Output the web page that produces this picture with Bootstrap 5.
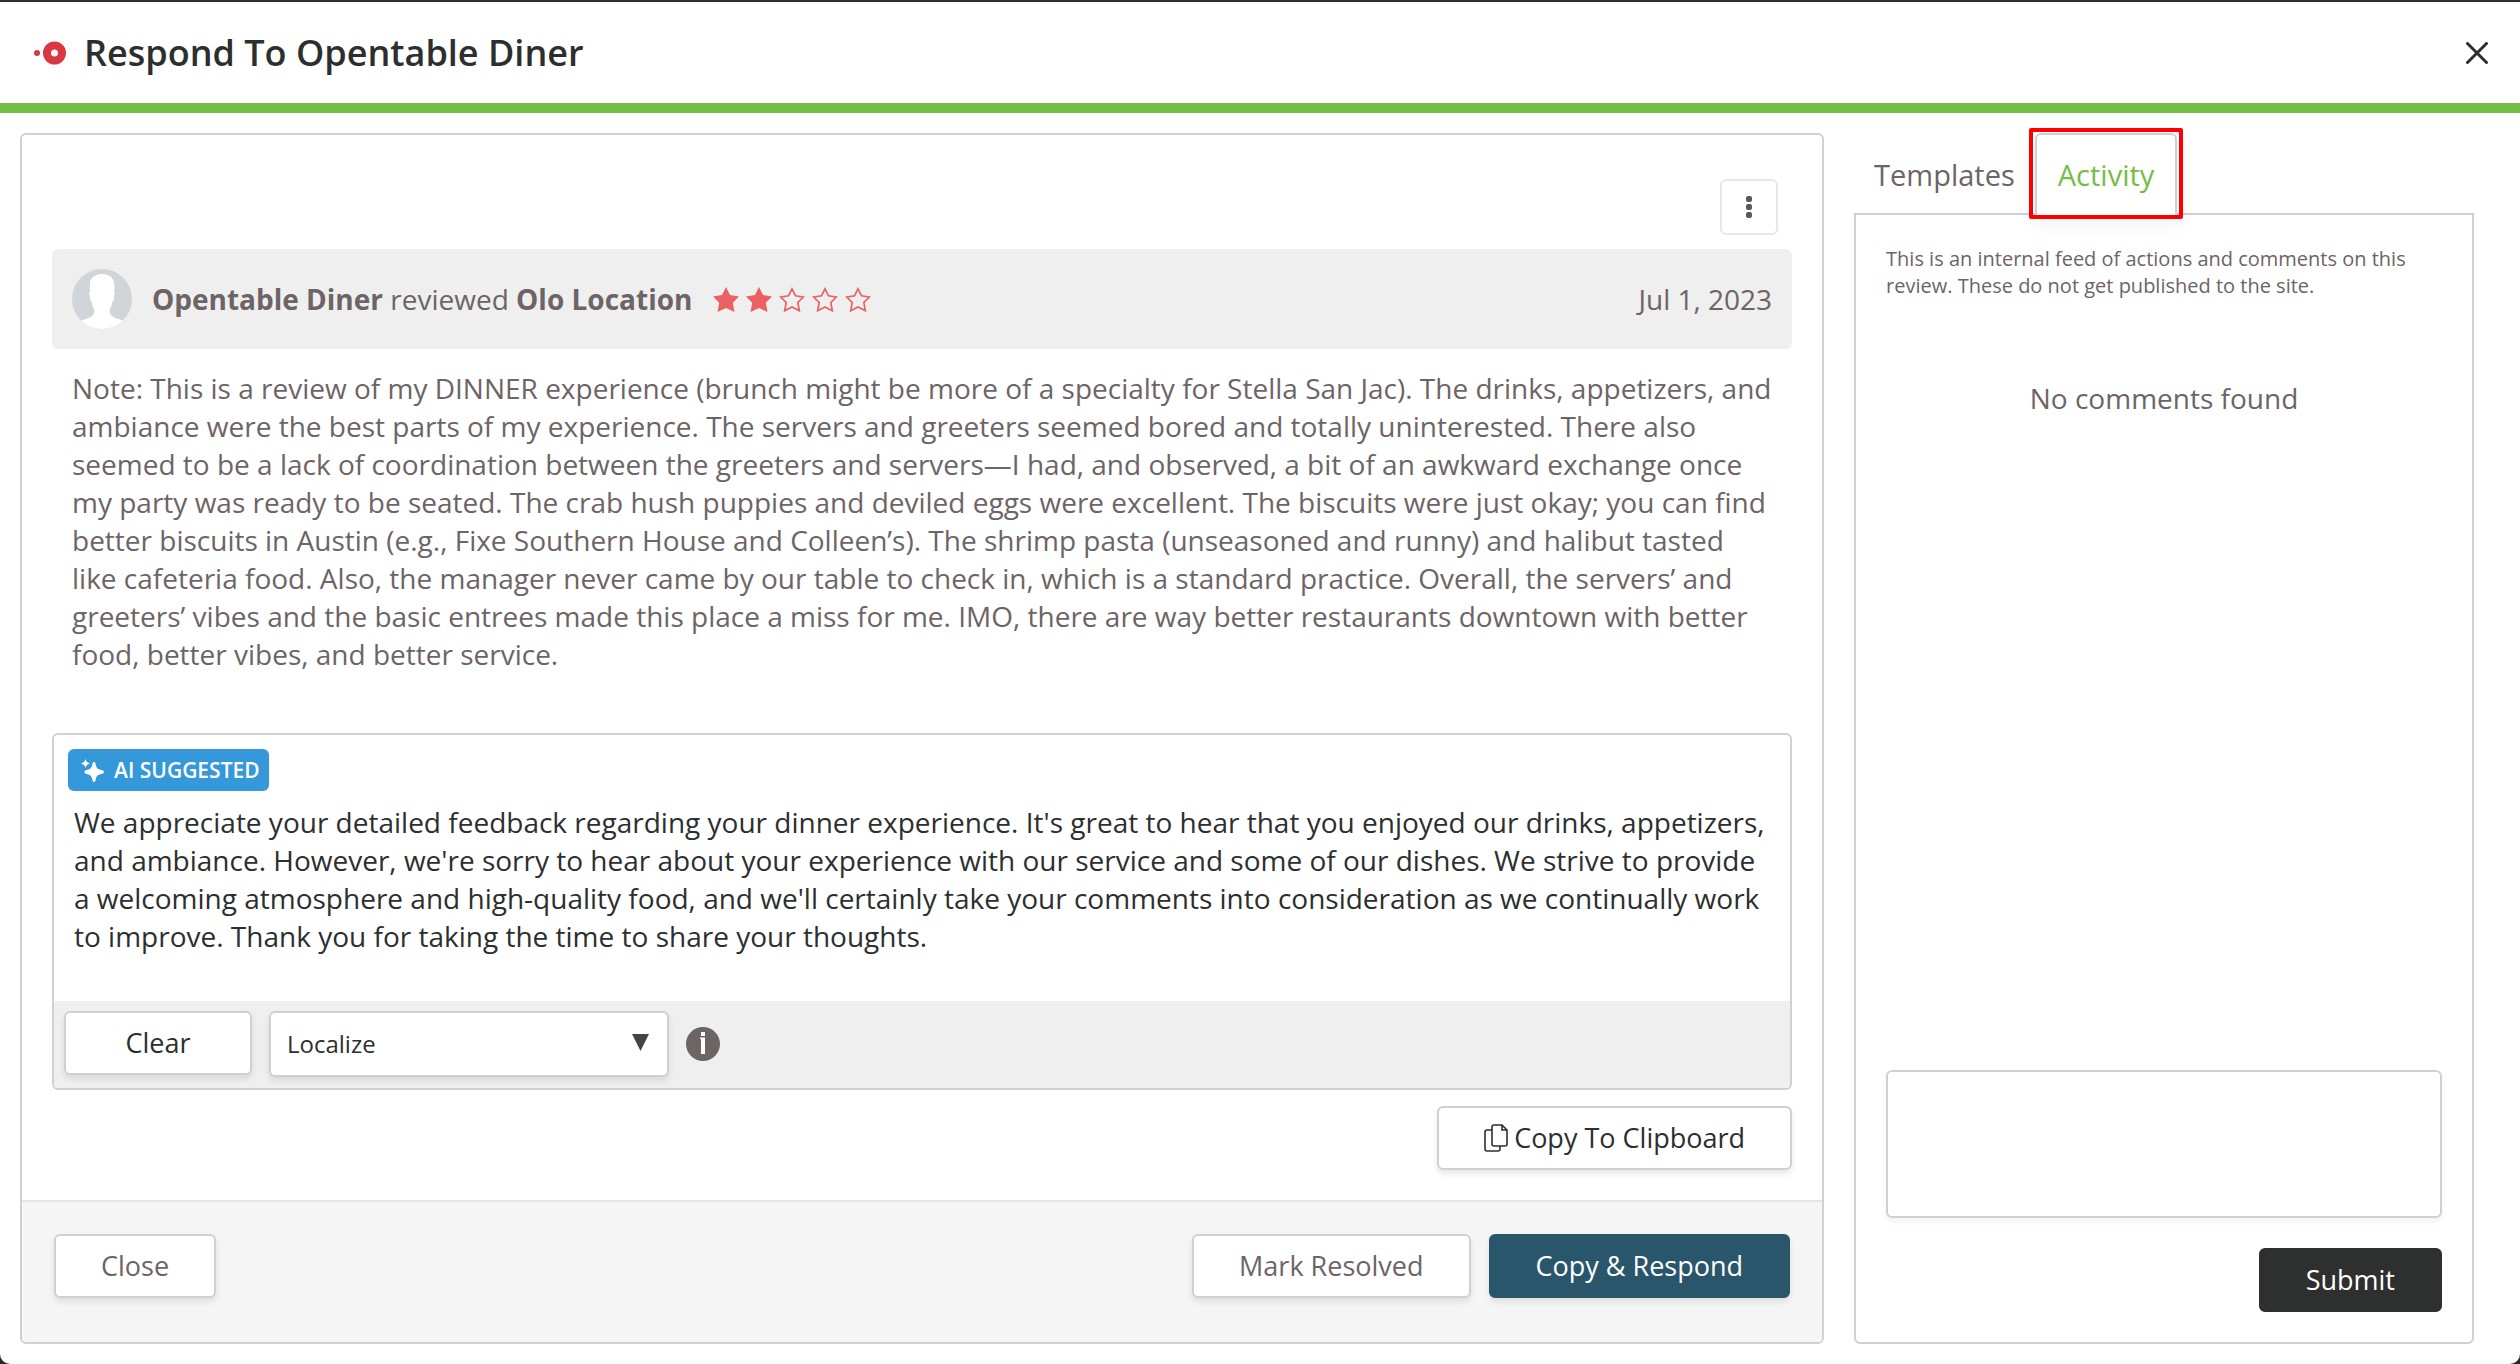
<!DOCTYPE html>
<html lang="en">
<head>
<meta charset="utf-8">
<meta name="viewport" content="width=device-width, initial-scale=1">
<title>Respond To Opentable Diner</title>
<link href="https://cdn.jsdelivr.net/npm/bootstrap@5.3.0/dist/css/bootstrap.min.css" rel="stylesheet">
<style>
  :root { --ink: #2d2f2f; --soft: #6d6466; --line: #d0d0d0; --green: #75bd46; }
  body { background: #2b2527; color: var(--soft); font: 28px/38px "Open Sans", "Noto Sans", sans-serif; }
  .dialog-shell { min-height: 100vh; border-top: 2px solid #342c2e; }
  .dialog-box { background: #fff; border-radius: 0 0 10px 10px; }
  .dialog-head { border-bottom: 10px solid var(--green); padding: 0 25px 0 34px; height: 111px; }
  .dialog-head h1 { font-size: 36px; line-height: 48px; font-weight: 600; color: var(--ink); margin: 0 0 0 18px; }
  .dialog-grid { display: grid; grid-template-columns: 2.91fr 1fr; gap: 30px; padding: 20px 46px 20px 20px; }
  .panel { border: 2px solid var(--line); border-radius: 6px; overflow: hidden; }
  .panel-main { padding: 44px 30px 30px; }
  .panel-foot { background: #f5f5f5; border-top: 2px solid #e4e4e4; padding: 32px 32px 44px; gap: 18px; }
  .btn { --bs-btn-font-size: 27px; --bs-btn-line-height: 36px; --bs-btn-border-width: 2px; --bs-btn-border-radius: 6px; --bs-btn-padding-y: 11px; --bs-btn-padding-x: 45px; height: 64px; }
  .btn-plain { background: #fff; border-color: var(--line); color: var(--soft); box-shadow: 0 4px 6px rgba(0,0,0,.09); }
  .btn-ink { color: var(--ink); }
  .btn-copy { gap: 6px; }
  .btn-teal { background: #29566b; border-color: #29566b; color: #fff; box-shadow: 0 4px 6px rgba(0,0,0,.09); }
  .btn-dusk { background: #2e302f; border-color: #2e302f; color: #fff; }
  .btn-kebab { width: 58px; height: 56px; padding: 0; border-color: #e8e8e8; box-shadow: none; margin-right: 14px; }
  .btn-x { width: 36px; height: 36px; }
  .review-bar { background: #efefef; border-radius: 6px; padding: 0 20px; height: 100px; margin-top: 14px; }
  .review-bar strong { font-weight: 700; }
  .stars { gap: 7px; margin-left: 21px; }
  .review-text { padding: 20px 20px 0; margin-bottom: 60px; }
  .editor { border: 2px solid var(--line); border-radius: 6px; overflow: hidden; }
  .ai-tag { background: #3498db; color: #fff; border-radius: 6px; font-size: 21px; line-height: 42px; font-weight: 600; padding: 0 9px 0 13px; gap: 10px; margin: 14px 0 0 14px; }
  .editor textarea { border: 0; color: var(--ink); font-size: 28px; line-height: 38px; padding: 12px 20px; height: 210px; resize: none; display: block; }
  .editor-bar { background: #efefef; padding: 10px 10px 12px; height: 87px; gap: 17px; }
  .btn-clear { width: 188px; }
  .localize { appearance: none; width: 400px; height: 66px; border: 2px solid var(--line); border-radius: 6px; font-size: 24px; line-height: 32px; padding: 0 16px; color: var(--ink); box-shadow: 0 4px 6px rgba(0,0,0,.09); background: #fff url("data:image/svg+xml,%3Csvg xmlns='http://www.w3.org/2000/svg' viewBox='0 0 16 16'%3E%3Cpath fill='%23444' d='M0 0h16L8 16z'/%3E%3C/svg%3E") no-repeat right 18px top 21px / 17px 17px; }
  .side-tabs { border: 0; }
  .side-tabs .nav-link { height: 82px; padding: 0 18px; border: 2px solid transparent; border-bottom: 0; border-radius: 6px 6px 0 0; color: var(--soft); font-size: 29px; font-weight: 500; margin: 0; }
  .side-tabs .nav-link.active { color: var(--green); border-color: var(--line); background: #fff; padding: 0 21px; }
  .marker { position: absolute; inset: -5px -6px -4px; border: 4px solid #f00; border-radius: 2px; box-shadow: 0 8px 16px rgba(0,0,0,.04); pointer-events: none; }
  .side-body { border: 2px solid var(--line); border-radius: 0 0 6px 6px; padding: 30px; margin-top: -2px; }
  .side-note { font-size: 20px; line-height: 27px; margin-bottom: 80px; }
  .side-body textarea { height: 148px; border: 2px solid var(--line); border-radius: 6px; resize: none; box-shadow: 0 4px 6px rgba(0,0,0,.05); margin-bottom: 30px; }
</style>
<script src="https://cdn.jsdelivr.net/npm/bootstrap@5.3.0/dist/js/bootstrap.bundle.min.js"></script>
</head>
<body>
<div class="dialog-shell d-flex flex-column">
<div class="dialog-box d-flex flex-column flex-grow-1">
  <header class="dialog-head d-flex align-items-center">
    <svg width="32" height="24" viewBox="0 0 32 24" aria-hidden="true"><circle cx="3" cy="12" r="3" fill="#da3743"/><circle cx="20.500" cy="12" r="7.500" fill="none" stroke="#da3743" stroke-width="8"/></svg>
    <h1 class="flex-grow-1">Respond To Opentable Diner</h1>
    <button type="button" class="btn btn-x border-0 p-0 d-flex align-items-center justify-content-center" aria-label="Close dialog"><svg width="22" height="22" viewBox="0 0 22 22"><path d="M1.500 1.500l19 19M20.500 1.500l-19 19" stroke="#2d2f2f" stroke-width="3" stroke-linecap="round"/></svg></button>
  </header>
  <main class="dialog-grid flex-grow-1">
    <section class="panel d-flex flex-column">
      <div class="panel-main flex-grow-1">
        <div class="d-flex justify-content-end">
          <button type="button" class="btn btn-plain btn-kebab d-flex align-items-center justify-content-center" aria-label="More actions"><svg width="6" height="22" viewBox="0 0 6 22" fill="#58595b"><rect width="6" height="6" rx="2"/><rect y="8" width="6" height="6" rx="2"/><rect y="16" width="6" height="6" rx="2"/></svg></button>
        </div>
        <div class="review-bar d-flex align-items-center">
          <svg class="me-3" width="60" height="60" viewBox="0 0 60 60" aria-hidden="true"><defs><clipPath id="face"><circle cx="30" cy="30" r="30"/></clipPath></defs><g clip-path="url(#face)"><path fill="#d1d5da" d="M0 0h60v60H0z"/><path fill="#fff" d="M30 5c-5 0-7 2-9 3-3 2-3 6-3 10v5c-1 0-1 2 0 5 0 3 1 5 2 5 0 3 1 5 2 7 1 5-1 7-5 9-4 1-7 2-10 4v8h46v-8c-3-2-6-3-10-4-4-2-6-4-5-9 1-2 2-4 2-7 1 0 2-2 2-5 1-3 1-5 0-5 2-10-1-18-12-18z"/></g></svg>
          <span class="ms-1"><strong>Opentable Diner</strong> reviewed <strong>Olo Location</strong></span>
          <span class="stars d-flex" role="img" aria-label="2 out of 5 stars">
            <svg width="26" height="25" viewBox="0 0 26 25" fill="#eb6060"><path d="M13 0l4 8 9 1.400-6.200 6.300L21.500 25 13 21 4.500 25l1.700-9.300L0 9.400 9 8z"/></svg>
            <svg width="26" height="25" viewBox="0 0 26 25" fill="#eb6060"><path d="M13 0l4 8 9 1.400-6.200 6.300L21.500 25 13 21 4.500 25l1.700-9.300L0 9.400 9 8z"/></svg>
            <svg width="26" height="25" viewBox="0 0 26 25" fill="none" stroke="#eb6060" stroke-width="1.700"><path d="M13 1.800l3.500 7 7.800 1.200-5.500 5.500 1.500 8.200L13 20l-7.300 3.700 1.500-8.200L1.700 10l7.800-1.200z"/></svg>
            <svg width="26" height="25" viewBox="0 0 26 25" fill="none" stroke="#eb6060" stroke-width="1.700"><path d="M13 1.800l3.500 7 7.800 1.200-5.500 5.500 1.500 8.200L13 20l-7.300 3.700 1.500-8.200L1.700 10l7.800-1.200z"/></svg>
            <svg width="26" height="25" viewBox="0 0 26 25" fill="none" stroke="#eb6060" stroke-width="1.700"><path d="M13 1.800l3.500 7 7.800 1.200-5.500 5.500 1.500 8.200L13 20l-7.300 3.700 1.500-8.200L1.700 10l7.800-1.200z"/></svg>
          </span>
          <time class="ms-auto" datetime="2023-07-01">Jul 1, 2023</time>
        </div>
        <p class="review-text">Note: This is a review of my DINNER experience (brunch might be more of a specialty for Stella San Jac). The drinks, appetizers, and ambiance were the best parts of my experience. The servers and greeters seemed bored and totally uninterested. There also seemed to be a lack of coordination between the greeters and servers—I had, and observed, a bit of an awkward exchange once my party was ready to be seated. The crab hush puppies and deviled eggs were excellent. The biscuits were just okay; you can find better biscuits in Austin (e.g., Fixe Southern House and Colleen’s). The shrimp pasta (unseasoned and runny) and halibut tasted like cafeteria food. Also, the manager never came by our table to check in, which is a standard practice. Overall, the servers’ and greeters’ vibes and the basic entrees made this place a miss for me. IMO, there are way better restaurants downtown with better food, better vibes, and better service.</p>
        <div class="editor">
          <label class="ai-tag d-inline-flex align-items-center align-top" for="reply"><svg width="23" height="23" viewBox="0 0 23 23" fill="#fff"><path d="M13 3c1.200 0 1.300 1 1.700 2.500C15.500 9 16.500 10 20 11c2 .5 3 .8 3 2s-1 1.500-3 2c-3.500 1-4.500 2-5.300 5.500C14.300 22 14.200 23 13 23s-1.300-1-1.700-2.500C10.500 17 9.500 16 6 15c-2-.5-2.500-.8-2.500-2S4 11.500 6 11c3.500-1 4.500-2 5.300-5.500C11.700 4 11.800 3 13 3z"/><path d="M4.500 0C5.300 2.500 6.300 3.700 9 4.500 6.300 5.300 5.300 6.500 4.500 9 3.700 6.500 2.700 5.300 0 4.500 2.700 3.700 3.700 2.500 4.500 0z"/></svg>AI SUGGESTED</label>
          <textarea id="reply" class="w-100">We appreciate your detailed feedback regarding your dinner experience. It's great to hear that you enjoyed our drinks, appetizers, and ambiance. However, we're sorry to hear about your experience with our service and some of our dishes. We strive to provide a welcoming atmosphere and high-quality food, and we'll certainly take your comments into consideration as we continually work to improve. Thank you for taking the time to share your thoughts.</textarea>
          <div class="editor-bar d-flex">
            <button type="button" class="btn btn-plain btn-ink btn-clear">Clear</button>
            <select class="localize" aria-label="Localize"><option>Localize</option></select>
            <svg class="align-self-center" width="34" height="34" viewBox="0 0 34 34" role="img" aria-label="Information"><circle cx="17" cy="17" r="17" fill="#6d6466"/><path d="M15 5h4v4h-4zM14 10.500h5V27h-4V12h-1z" fill="#fff"/></svg>
          </div>
        </div>
        <div class="d-flex justify-content-end mt-3">
          <button type="button" class="btn btn-plain btn-ink btn-copy d-flex align-items-center"><svg width="24" height="28" viewBox="0 0 24 28" fill="none" stroke="#2d2f2f" stroke-width="1.600"><path d="M10 1h8l5 5v14a2 2 0 0 1-2 2H10a2 2 0 0 1-2-2V3a2 2 0 0 1 2-2zM18 1v5h5M8 6H3a2 2 0 0 0-2 2v17a2 2 0 0 0 2 2h11a2 2 0 0 0 2-2v-3"/></svg>Copy To Clipboard</button>
        </div>
      </div>
      <footer class="panel-foot d-flex">
        <button type="button" class="btn btn-plain me-auto">Close</button>
        <button type="button" class="btn btn-plain">Mark Resolved</button>
        <button type="button" class="btn btn-teal">Copy &amp; Respond</button>
      </footer>
    </section>
    <aside class="d-flex flex-column">
      <ul class="nav nav-tabs side-tabs">
        <li class="nav-item"><a class="nav-link d-flex align-items-center" href="#templates">Templates</a></li>
        <li class="nav-item position-relative"><a class="nav-link active d-flex align-items-center" href="#activity" aria-current="page">Activity</a><span class="marker"></span></li>
      </ul>
      <div class="side-body d-flex flex-column flex-grow-1" id="activity">
        <p class="side-note">This is an internal feed of actions and comments on this review. These do not get published to the site.</p>
        <p class="text-center mb-auto">No comments found</p>
        <textarea class="w-100" aria-label="Comment"></textarea>
        <button type="button" class="btn btn-dusk align-self-end">Submit</button>
      </div>
    </aside>
  </main>
</div>
</div>
</body>
</html>
